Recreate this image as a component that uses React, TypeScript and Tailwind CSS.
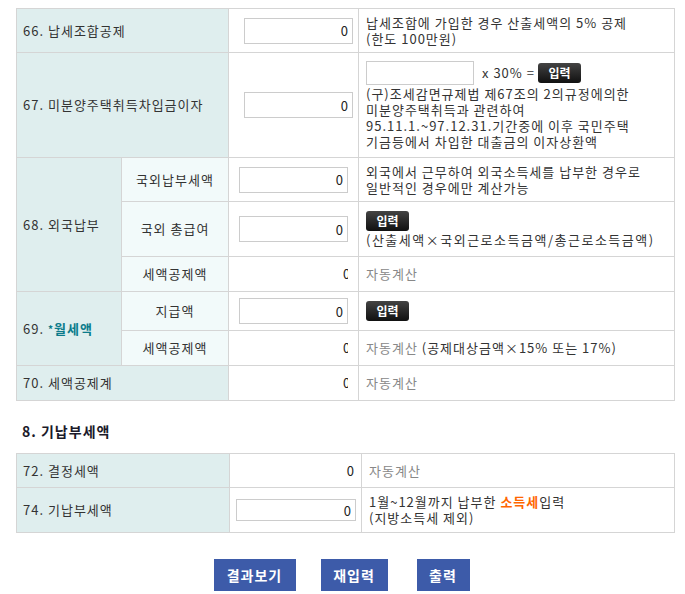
import React from "react";

const B = "border border-[#d5d5d5]";
const LBL = `${B} bg-[#dfeeee] text-[#333] pl-[6px]`;
const SUB = `${B} bg-[#f2fafa] text-[#333] text-center`;
const VAL = `${B} bg-white`;
const DSC = `${B} bg-white text-[#333] pl-[7px] pr-[2px]`;

function Box({ w = 109, h = 26, mr = 5 }: { w?: number; h?: number; mr?: number }) {
  return (
    <div className="flex justify-end">
      <input
        readOnly
        value="0"
        className="border border-[#cccccc] bg-white text-right text-[#222] px-[4px] outline-none tracking-normal"
        style={{ width: w, height: h, marginRight: mr }}
      />
    </div>
  );
}

function Clip() {
  return (
    <div className="flex justify-end pr-[10px]">
      <div className="w-[5px] overflow-hidden text-[#222] tracking-normal">0</div>
    </div>
  );
}

function Badge() {
  return (
    <span className="inline-flex items-center justify-center w-[43px] h-[20px] rounded-[3px] bg-gradient-to-b from-[#444] to-[#111] text-white text-[12px] font-bold tracking-normal align-middle">
      입력
    </span>
  );
}

function Auto() {
  return <span className="text-[#888]">자동계산</span>;
}

export default function App() {
  return (
    <div
      className="pt-[8px] pl-[16px] text-[13px] leading-[16px] tracking-[1px] bg-white min-h-[594px]"
      style={{ fontFamily: '"Noto Sans CJK KR", "Liberation Sans", sans-serif' }}
    >
      <table className="border-collapse table-fixed w-[658px]">
        <colgroup>
          <col className="w-[105px]" />
          <col className="w-[107px]" />
          <col className="w-[130px]" />
          <col className="w-[316px]" />
        </colgroup>
        <tbody>
          <tr className="h-[44px]">
            <td colSpan={2} className={LBL}>66. 납세조합공제</td>
            <td className={VAL}><Box /></td>
            <td className={DSC}>
              납세조합에 가입한 경우 산출세액의 5% 공제
              <br />
              (한도 100만원)
            </td>
          </tr>
          <tr className="h-[105px]">
            <td colSpan={2} className={LBL}>67. 미분양주택취득차입금이자</td>
            <td className={VAL}><Box /></td>
            <td className={DSC}>
              <div className="flex items-center h-[26px]">
                <input readOnly className="w-[108px] h-[24px] border border-[#cccccc] outline-none" />
                <span className="ml-[8px] mr-[3px]">x 30% =</span>
                <Badge />
              </div>
              <div>
                (구)조세감면규제법 제67조의 2의규정에의한
                <br />
                미분양주택취득과 관련하여
                <br />
                95.11.1.~97.12.31.기간중에 이후 국민주택
                <br />
                기금등에서 차입한 대출금의 이자상환액
              </div>
            </td>
          </tr>
          <tr className="h-[44px]">
            <td rowSpan={3} className={LBL}>68. 외국납부</td>
            <td className={SUB}>국외납부세액</td>
            <td className={VAL}><Box mr={10} /></td>
            <td className={DSC}>
              외국에서 근무하여 외국소득세를 납부한 경우로
              <br />
              일반적인 경우에만 계산가능
            </td>
          </tr>
          <tr className="h-[55px]">
            <td className={SUB}>국외 총급여</td>
            <td className={VAL}><Box mr={10} /></td>
            <td className={DSC}>
              <div className="h-[22px] flex items-center"><Badge /></div>
              <div className="tracking-[1.5px] whitespace-nowrap">(산출세액×국외근로소득금액/총근로소득금액)</div>
            </td>
          </tr>
          <tr className="h-[35px]">
            <td className={SUB}>세액공제액</td>
            <td className={VAL}><Clip /></td>
            <td className={DSC}><Auto /></td>
          </tr>
          <tr className="h-[39px]">
            <td rowSpan={2} className={LBL}>
              69.{" "}
              <span className="text-[#0b7b8b] font-bold">
                <span className="text-[10px] align-top">*</span>월세액
              </span>
            </td>
            <td className={SUB}>지급액</td>
            <td className={VAL}><Box mr={10} /></td>
            <td className={DSC}><Badge /></td>
          </tr>
          <tr className="h-[35px]">
            <td className={SUB}>세액공제액</td>
            <td className={VAL}><Clip /></td>
            <td className={DSC}>
              <Auto /> (공제대상금액×15% 또는 17%)
            </td>
          </tr>
          <tr className="h-[35px]">
            <td colSpan={2} className={LBL}>70. 세액공제계</td>
            <td className={VAL}><Clip /></td>
            <td className={DSC}><Auto /></td>
          </tr>
        </tbody>
      </table>

      <div className="mt-[22px] ml-[6px] text-[14px] font-bold text-[#1a1a2a] h-[30px]">8. 기납부세액</div>

      <table className="border-collapse table-fixed w-[658px]">
        <colgroup>
          <col className="w-[213px]" />
          <col className="w-[132px]" />
          <col className="w-[313px]" />
        </colgroup>
        <tbody>
          <tr className="h-[34px]">
            <td className={LBL}>72. 결정세액</td>
            <td className={`${VAL} text-right pr-[6px] text-[#222]`}>0</td>
            <td className={DSC}><Auto /></td>
          </tr>
          <tr className="h-[45px]">
            <td className={LBL}>74. 기납부세액</td>
            <td className={VAL}><Box w={120} h={22} mr={5} /></td>
            <td className={DSC}>
              1월~12월까지 납부한 <span className="text-[#ff6600] font-bold">소득세</span>입력
              <br />
              (지방소득세 제외)
            </td>
          </tr>
        </tbody>
      </table>

      <div className="flex justify-center mt-[26px] pr-[18px]">
        <button className="w-[82px] h-[32px] bg-[#3d5ba9] text-white text-[14px] font-bold">결과보기</button>
        <button className="ml-[25px] w-[67px] h-[32px] bg-[#3d5ba9] text-white text-[14px] font-bold">재입력</button>
        <button className="ml-[29px] w-[53px] h-[32px] bg-[#3d5ba9] text-white text-[14px] font-bold">출력</button>
      </div>
    </div>
  );
}
